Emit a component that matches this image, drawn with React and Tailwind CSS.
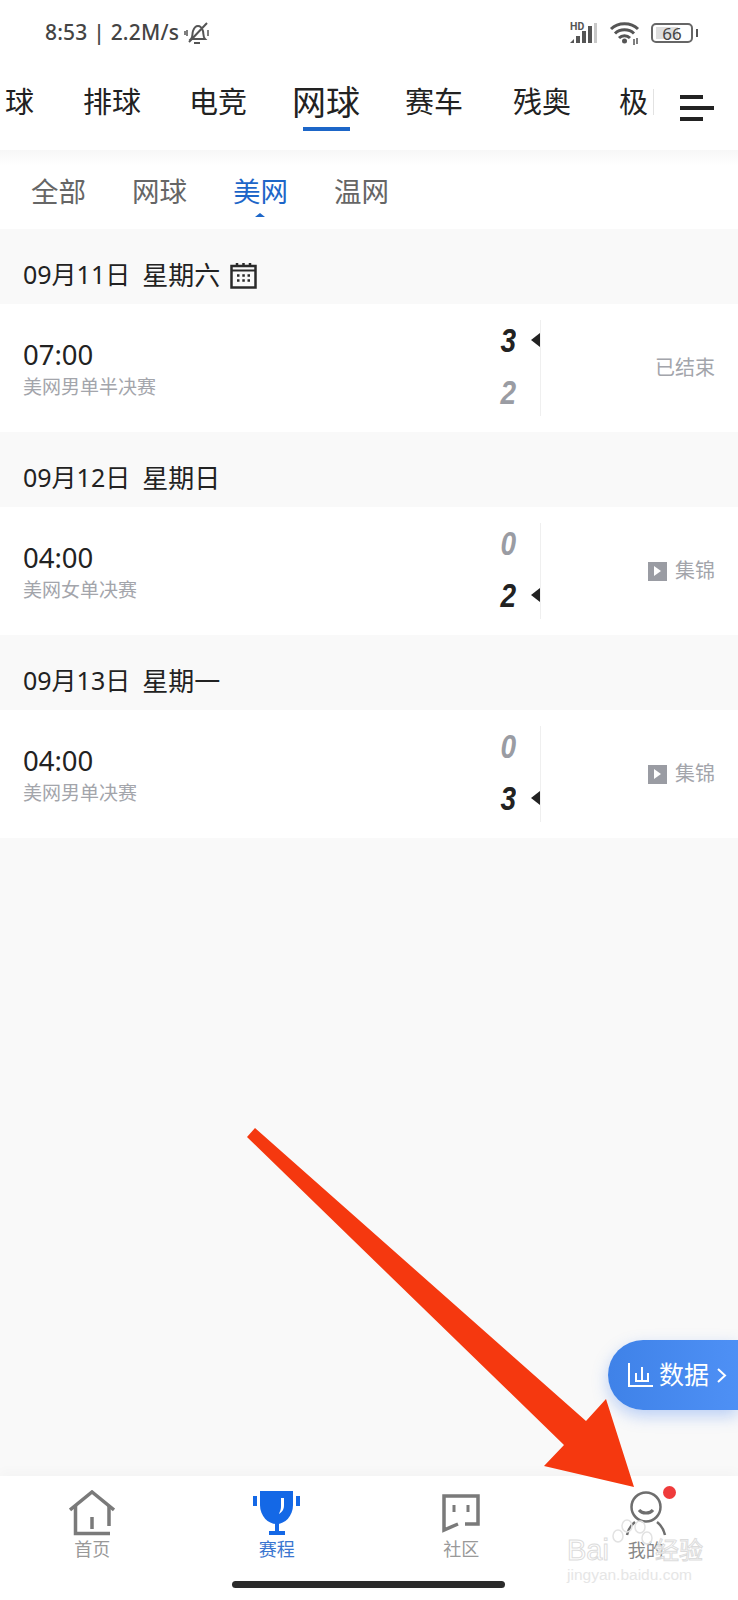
const font = { fontFamily: '"Noto Sans", "Noto Sans CJK SC", sans-serif' };

const topTabs = [
  { label: '球', w: 'w-[34px]', clip: true },
  { label: '排球', w: 'w-[58px] ml-[49px]' },
  { label: '电竞', w: 'w-[58px] ml-[48px]' },
  { label: '网球', w: 'w-[68px] ml-[45px]', active: true },
  { label: '赛车', w: 'w-[58px] ml-[45px]' },
  { label: '残奥', w: 'w-[58px] ml-[50px]' },
  { label: '极', w: 'w-[29px] ml-[48px]' },
];

const subTabs = [
  { label: '全部' },
  { label: '网球' },
  { label: '美网', active: true },
  { label: '温网' },
];

const days = [
  {
    date: '09月11日',
    week: '星期六',
    calendar: true,
    time: '07:00',
    name: '美网男单半决赛',
    a: 3,
    b: 2,
    winner: 'a',
    status: '已结束',
  },
  { date: '09月12日', week: '星期日', time: '04:00', name: '美网女单决赛', a: 0, b: 2, winner: 'b' },
  { date: '09月13日', week: '星期一', time: '04:00', name: '美网男单决赛', a: 0, b: 3, winner: 'b' },
];

function Score({ value, win }) {
  return (
    <div className="flex items-center h-[52px] shrink-0 justify-end">
      <span
        className={`text-[33px] leading-none italic font-bold w-[22px] text-right origin-right scale-x-[0.85] ${win ? 'text-[#222222]' : 'text-[#9a9ca3]'}`}
        style={{ fontFamily: '"Liberation Sans", sans-serif' }}
      >
        {value}
      </span>
      <span className="w-[24px] flex justify-end">
        {win && <span className="w-0 h-0 border-y-[7px] border-y-transparent border-r-[9px] border-r-[#222222]" />}
      </span>
    </div>
  );
}

function MatchCard({ day }) {
  return (
    <div className="bg-white h-[128px] flex items-center pl-[23px] pr-[23px]">
      <div className="flex-1 pt-[1px]">
        <div className="text-[27.500px] leading-[32px] text-[#222222]">{day.time}</div>
        <div className="text-[19px] leading-[24px] text-[#a3a5ab] mt-[4px]">{day.name}</div>
      </div>
      <div className="w-[54px] border-r border-[#efefef] h-[96px] flex flex-col justify-center pb-[4px]">
        <Score value={day.a} win={day.winner === 'a'} />
        <Score value={day.b} win={day.winner === 'b'} />
      </div>
      <div className="w-[174px] flex justify-end items-center gap-[8px] text-[20px] text-[#a3a5ab]">
        {!day.status && (
          <span className="w-[19px] h-[19px] bg-[#9a9ca3] flex items-center justify-center">
            <span className="w-0 h-0 border-y-[5px] border-y-transparent border-l-[7px] border-l-white" />
          </span>
        )}
        <span>{day.status || '集锦'}</span>
      </div>
    </div>
  );
}

function CalendarIcon() {
  return (
    <svg width="27" height="27" viewBox="0 0 27 27" className="ml-[10px]" fill="none" stroke="#2a2a2a" strokeWidth="2.500">
      <rect x="1.500" y="4" width="24" height="21.500" />
      <path d="M1.500 8.500h24" strokeWidth="2" />
      <path d="M7 1v3M13.500 1v3M20 1v3" />
      <path d="M7 13.500h2.500M12.300 13.500h2.500M17.500 13.500h2.500M7 18.500h2.500M12.300 18.500h2.500M17.500 18.500h2.500" />
    </svg>
  );
}

function StatusBar() {
  return (
    <div className="h-[66px] flex items-center pl-[45px] pr-[40px] text-[#444444] text-[21px] font-medium">
      <span className="tracking-[0.2px]">8:53 | 2.2M/s</span>
      <svg width="26" height="26" viewBox="0 0 26 26" fill="none" stroke="#555555" strokeWidth="2" className="ml-[5px]">
        <path d="M7 19c2-2 1-5 2-8 1-3 3-5 5-5s4 2 5 5c.6 3 0 6 2 8zM10 23h6M5 22 23 3" />
        <path d="M3 10v6M1 11v4M24 10v6" strokeWidth="1.500" />
      </svg>
      <div className="flex-1" />
      <svg width="30" height="24" viewBox="0 0 30 24" fill="#555555">
        <text x="1" y="9" fontSize="10.500" fontWeight="700" fontFamily="Roboto, sans-serif">HD</text>
        <path d="M1 22l4-4v4zM7 15h4v7H7z" />
        <rect x="13" y="10" width="4" height="12" />
        <rect x="19" y="5" width="4" height="17" />
        <rect x="25" y="2" width="3" height="20" fill="#c8c8c8" />
      </svg>
      <svg width="32" height="26" viewBox="0 0 32 26" fill="none" stroke="#555555" strokeWidth="3" className="ml-[10px]">
        <path d="M2 9c7-7 20-7 27 0M6 13.500c5-5 14-5 19 0M10 18c3-3 8-3 11 0" />
        <circle cx="15.500" cy="21" r="2.500" fill="#555555" stroke="none" />
        <path d="M25 19v6M28 18v6" strokeWidth="1.500" />
      </svg>
      <div className="ml-[10px] relative w-[42px] h-[20px] border-2 border-[#666666] rounded-[5px] flex items-center justify-center text-[17px] font-normal leading-none text-[#444444]">
        <span className="absolute left-[3px] top-[2px] bottom-[2px] w-[22px] bg-[#dedede]" />
        <span className="relative">66</span>
      </div>
      <span className="ml-[3px] w-[2px] h-[8px] bg-[#555555]" />
    </div>
  );
}

function TopTabs() {
  return (
    <div className="h-[84px] flex relative">
      <div className="flex-1 flex overflow-hidden items-start pt-[17px] whitespace-nowrap">
        {topTabs.map((t) => (
          <div key={t.label} className={`shrink-0 relative ${t.w} ${t.clip ? 'text-right' : ''}`}>
            <span className={`${t.active ? 'text-[34px] leading-[38px]' : 'text-[29px] leading-[38px]'} text-[#222222]`}>{t.label}</span>
            {t.active && <div className="absolute left-[11px] top-[44px] w-[47px] h-[4px] bg-[#1d66c8]" />}
          </div>
        ))}
      </div>
      <div className="absolute left-[653px] top-[23px] h-[26px] w-px bg-[#e2e2e2]" />
      <div className="absolute left-[680px] top-[29px] flex flex-col gap-[7px]">
        <div className="w-[23px] h-[4px] bg-[#222222]" />
        <div className="w-[34px] h-[4px] bg-[#222222]" />
        <div className="w-[23px] h-[4px] bg-[#222222]" />
      </div>
    </div>
  );
}

function SubTabs() {
  return (
    <div className="h-[79px] bg-gradient-to-b from-[#f7f7f7] to-white to-[20%] flex items-start pl-[31px] gap-[46px] pt-[20px]">
      {subTabs.map((t) => (
        <div key={t.label} className="relative">
          <span className={`text-[27.500px] leading-[44px] ${t.active ? 'text-[#1d66c8]' : 'text-[#666666]'}`}>{t.label}</span>
          {t.active && (
            <span className="absolute left-[22px] top-[43px] w-0 h-0 border-x-[5px] border-x-transparent border-b-[4px] border-b-[#1d66c8]" />
          )}
        </div>
      ))}
    </div>
  );
}

function BottomNav() {
  return (
    <div className="h-[124px] bg-white relative shadow-[0_-6px_10px_rgba(0,0,0,0.02)] grid grid-cols-4">
      <div className="flex flex-col items-center pt-[14px]">
        <svg width="46" height="46" viewBox="0 0 46 46" fill="none" stroke="#7a7a7a" strokeWidth="3.500">
          <path d="M1 20 23 2l22 18" />
          <path d="M6.500 16v27.500H41M40 16v20" />
          <path d="M23 27v12" strokeWidth="3.500" />
        </svg>
        <span className="text-[18px] leading-[24px] text-[#999999] mt-[1px]">首页</span>
      </div>
      <div className="flex flex-col items-center pt-[14px]">
        <svg width="50" height="46" viewBox="0 0 50 46">
          <path d="M8 1h33v14c0 11-8 19-16.500 19S8 26 8 15z" fill="#1468e6" />
          <rect x="1" y="6" width="4" height="10" fill="#1468e6" />
          <rect x="44" y="6" width="4" height="10" fill="#1468e6" />
          <rect x="23" y="33" width="4" height="9" fill="#1468e6" />
          <rect x="17" y="41" width="16" height="4" fill="#1468e6" />
          <path d="M29 8h3v7c0 4-1 6-5 9 1-3 2-4 2-8z" fill="#ffffff" />
        </svg>
        <span className="text-[18px] leading-[24px] text-[#3a76d0] mt-[1px]">赛程</span>
      </div>
      <div className="flex flex-col items-center pt-[18px]">
        <svg width="38" height="40" viewBox="0 0 38 40" fill="none" stroke="#7a7a7a" strokeWidth="3.500">
          <path d="M23 30h13V2H2v34l14-6" />
          <path d="M12 11v7M26 11v7" strokeWidth="3" />
        </svg>
        <span className="text-[18px] leading-[24px] text-[#999999] mt-[3px]">社区</span>
      </div>
      <div className="flex flex-col items-center pt-[14px] relative">
        <svg width="42" height="48" viewBox="0 0 42 48" fill="none" stroke="#6e6e6e" strokeWidth="2.500">
          <circle cx="21" cy="17" r="14.500" />
          <path d="M14 20c3 4 11 4 14 0" strokeWidth="3" />
          <path d="M2 45c1.500-6 4-10 8-13M40 45c-1.500-6-4-10-8-13" />
        </svg>
        <span className="text-[18px] leading-[24px] text-[#888888]">我的</span>
        <span className="absolute left-[109px] top-[10px] w-[13px] h-[13px] rounded-full bg-[#ef3b3b]" />
      </div>
      <div className="absolute left-[232px] top-[105px] w-[273px] h-[7px] rounded-full bg-[#2b2b2b]" />
    </div>
  );
}

export default function App() {
  return (
    <div className="w-[738px] h-[1600px] bg-[#f9f9f9] flex flex-col relative overflow-hidden" style={font}>
      <div className="bg-white">
        <StatusBar />
        <TopTabs />
      </div>
      <SubTabs />
      {days.map((day) => (
        <div key={day.date}>
          <div className="h-[75px] flex items-center pl-[23px] pt-[17px] text-[25px] text-[#222222]">
            <span>{day.date}</span>
            <span className="ml-[12px] text-[26px]">{day.week}</span>
            {day.calendar && <CalendarIcon />}
          </div>
          <MatchCard day={day} />
        </div>
      ))}
      <div className="flex-1" />
      <BottomNav />

      {/* floating data button */}
      <div className="absolute right-0 top-[1340px] w-[130px] h-[70px] rounded-l-[35px] bg-gradient-to-r from-[#3f82e8] to-[#4e90f5] shadow-[0_6px_16px_rgba(70,130,240,0.35)] flex items-center pl-[19px] text-white text-[25px]">
        <svg width="26" height="26" viewBox="0 0 26 26" fill="none" stroke="#ffffff" strokeWidth="2">
          <path d="M2 1v23h24M9 11v8h12v-8M15 5v14" />
        </svg>
        <span className="ml-[6px]">数据</span>
        <svg width="10" height="15" viewBox="0 0 10 15" fill="none" stroke="#ffffff" strokeWidth="2" className="ml-[8px]">
          <path d="M1 1l7 6.500L1 14" />
        </svg>
      </div>

      {/* red annotation arrow */}
      <svg className="absolute left-0 top-0" width="738" height="1600" viewBox="0 0 738 1600">
        <polygon points="255,1128 586,1421 606,1399 634,1487 544,1466 564,1445 247,1137" fill="#f5380f" />
      </svg>

      {/* watermark */}
      <div className="absolute left-[567px] top-[1536px] leading-none" style={{ fontFamily: '"Liberation Sans", sans-serif' }}>
        <div className="flex items-center text-[29px] text-white/70 [-webkit-text-stroke:1px_#dcdcdc] h-[28px]">
          <span>Bai</span>
          <span className="ml-[46px] text-[24px]" style={font}>经验</span>
        </div>
        <div className="text-[15.500px] mt-[3px] text-[#e6e6e6]">jingyan.baidu.com</div>
      </div>
      <svg className="absolute left-[610px] top-[1518px]" width="46" height="36" viewBox="0 0 46 36" fill="none" stroke="#e2e2e2" strokeWidth="1.500">
        <ellipse cx="8" cy="18" rx="5" ry="6" />
        <ellipse cx="17" cy="8" rx="5" ry="6" />
        <ellipse cx="30" cy="9" rx="5" ry="6" />
        <ellipse cx="37" cy="20" rx="5" ry="6" />
      </svg>
    </div>
  );
}
